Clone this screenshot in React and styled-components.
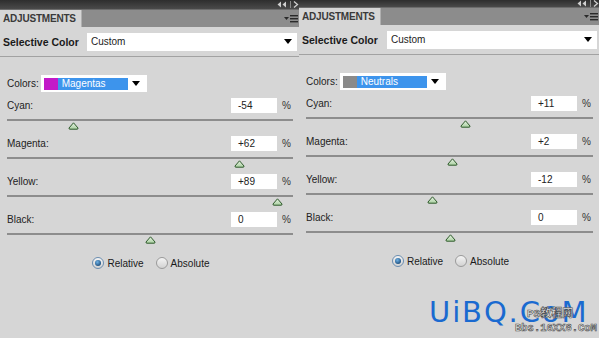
import React from "react"
import styled, { createGlobalStyle } from "styled-components"

const GlobalStyle = createGlobalStyle`
  html, body {
    margin: 0;
    padding: 0;
    background: #d6d6d6;
    overflow: hidden;
  }
  body {
    font-family: "Liberation Sans", Arial, sans-serif;
    color: #1c1c1c;
  }
`

const Screen = styled.div`
  position: relative;
  display: flex;
  width: 599px;
  height: 338px;
  background: #d6d6d6;
  overflow: hidden;
`

const Panel = styled.div`
  display: flex;
  flex-direction: column;
  width: ${props => props.$width}px;
  flex-shrink: 0;
`

const TopBar = styled.div`
  height: ${props => props.$height}px;
  background: linear-gradient(#2e2e2e, #4a4a4a);
  display: flex;
  align-items: center;
  justify-content: flex-end;
  overflow: hidden;
`

const TabBar = styled.div`
  height: 18px;
  display: flex;
  align-items: stretch;
  background: #8c8c8c;
  border-top: 1px solid #6c6c6c;
  box-sizing: border-box;
`

const Tab = styled.div`
  width: 82px;
  background: #d6d6d6;
  border-right: 1px solid #b0b0b0;
  display: flex;
  align-items: center;
  padding-left: 3px;
  box-sizing: border-box;
  font-size: 10px;
  font-weight: bold;
  color: #3a3a3a;
  letter-spacing: -0.2px;
`

const TabMenu = styled.div`
  margin-left: auto;
  display: flex;
  align-items: center;
  padding-right: 1px;
`

const PresetRow = styled.div`
  height: 29px;
  display: flex;
  align-items: center;
  padding: 0 2px 0 3px;
`

const PresetTitle = styled.span`
  font-size: 10.5px;
  font-weight: bold;
  color: #1a1a1a;
`

const Select = styled.div`
  margin-left: auto;
  width: ${props => props.$width}px;
  height: 18px;
  background: #fff;
  display: flex;
  align-items: center;
  padding: 0 5px 0 4px;
  box-sizing: border-box;
  font-size: 10px;
  color: #222;
`

const Caret = styled.svg`
  margin-left: auto;
  flex-shrink: 0;
`

const Divider = styled.div`
  height: 1px;
  background: #a2a2a2;
`

const Body = styled.div`
  padding: 0 6px 0 7px;
  display: flex;
  flex-direction: column;
`

const ColorsRow = styled.div`
  margin-top: 18px;
  display: flex;
  align-items: center;
  font-size: 10px;
`

const ColorSelect = styled.div`
  margin-left: 2px;
  width: 106px;
  height: 17px;
  background: #fff;
  display: flex;
  align-items: center;
  padding: 0 7px 0 3px;
  box-sizing: border-box;
`

const Swatch = styled.div`
  width: 14px;
  height: 12px;
  background: ${props => props.$color};
`

const Highlight = styled.div`
  width: 70px;
  height: 12px;
  background: #3d94ec;
  color: #fff;
  font-size: 10px;
  line-height: 12px;
  padding-left: 4px;
  box-sizing: border-box;
`

const SliderRow = styled.div`
  margin-top: ${props => props.$first ? 6 : 0}px;
  height: 38px;
  display: flex;
  flex-direction: column;
`

const SliderHeader = styled.div`
  height: 15px;
  display: flex;
  align-items: center;
  font-size: 10px;
  color: #222;
`

const ValueInput = styled.div`
  margin-left: auto;
  width: 46px;
  height: 15px;
  background: #fff;
  font-size: 10px;
  line-height: 15px;
  padding-left: 7px;
  box-sizing: border-box;
  color: #222;
`

const Percent = styled.span`
  width: 10px;
  margin-left: 5px;
  margin-right: 1px;
  font-size: 10px;
  color: #333;
`

const Track = styled.div`
  position: relative;
  margin-top: 6px;
  height: 2px;
  background: #8d8d8d;
`

const Thumb = styled.svg`
  position: absolute;
  top: 3px;
  margin-left: -5px;
`

const RadioRow = styled.div`
  margin-top: 7px;
  display: flex;
  justify-content: center;
  align-items: center;
  gap: 12px;
  font-size: 10px;
  color: #1a1a1a;
  padding-left: 2px;
`

const RadioItem = styled.label`
  display: flex;
  align-items: center;
  gap: 3px;
`

const RadioDot = styled.span`
  width: 12px;
  height: 12px;
  border-radius: 50%;
  border: 1px solid ${props => props.$on ? "#6a8db0" : "#9a9a9a"};
  box-sizing: border-box;
  background: linear-gradient(#f4f4f4, #d2d2d2);
  display: flex;
  align-items: center;
  justify-content: center;

  &::after {
    content: "";
    display: ${props => props.$on ? "block" : "none"};
    width: 6px;
    height: 6px;
    border-radius: 50%;
    background: radial-gradient(circle at 40% 35%, #6fb2e6, #1d4f7e 75%);
  }
`

const Watermark = styled.div`
  position: absolute;
  left: 429px;
  top: 295px;
  font-family: "DejaVu Sans", Verdana, sans-serif;
  font-size: 29px;
  letter-spacing: 1.9px;
  color: #1a6ad0;
  white-space: nowrap;
`

const Stamp = styled.div`
  position: absolute;
  left: ${props => props.$x}px;
  top: ${props => props.$y}px;
  font-family: "Liberation Mono", "Noto Sans CJK SC", monospace;
  font-size: ${props => props.$size}px;
  line-height: 1;
  font-weight: bold;
  color: #ececec;
  -webkit-text-stroke: 0.6px #4a4a4a;
  white-space: nowrap;
`

const CollapseIcon = () => (
  <svg width="22" height="7" viewBox="0 0 22 7">
    <path d="M4 0.5 L0.5 3.5 L4 6.5 Z M9 0.5 L5.5 3.5 L9 6.5 Z" fill="#cfcfcf" />
    <rect x="13" y="0" width="1" height="7" fill="#8a8a8a" />
    <path d="M17 0.5 L20.5 3.5 L17 6.5" fill="none" stroke="#cfcfcf" strokeWidth="1.3" />
  </svg>
)

const MenuIcon = () => (
  <svg width="14" height="9" viewBox="0 0 14 9">
    <path d="M0 3 L5 3 L2.5 6 Z" fill="#2a2a2a" />
    <rect x="6" y="1" width="8" height="1.4" fill="#2a2a2a" />
    <rect x="6" y="4" width="8" height="1.4" fill="#2a2a2a" />
    <rect x="6" y="7" width="8" height="1.4" fill="#2a2a2a" />
  </svg>
)

const DownCaret = () => (
  <Caret width="8" height="5" viewBox="0 0 8 5">
    <path d="M0 0 L8 0 L4 5 Z" fill="#000" />
  </Caret>
)

const SliderThumb = ({ value }) => (
  <Thumb width="11" height="8" viewBox="0 0 11 8" style={{ left: `${(value + 100) / 2}%` }}>
    <defs>
      <linearGradient id="thumbFill" x1="0" y1="0" x2="0" y2="1">
        <stop offset="0" stopColor="#e8f4e4" />
        <stop offset="1" stopColor="#a9cfa0" />
      </linearGradient>
    </defs>
    <path d="M5.5 0.8 L10 6 Q10.3 7.2 9 7.2 L2 7.2 Q0.7 7.2 1 6 Z" fill="url(#thumbFill)" stroke="#2f5a2c" strokeWidth="1" />
  </Thumb>
)

const formatValue = v => (v > 0 ? `+${v}` : `${v}`)

const AdjustmentsPanel = ({ width, top, swatch, colorName, values }) => (
  <Panel $width={width}>
    <TopBar $height={top}>
      <CollapseIcon />
    </TopBar>
    <TabBar>
      <Tab>ADJUSTMENTS</Tab>
      <TabMenu>
        <MenuIcon />
      </TabMenu>
    </TabBar>
    <PresetRow>
      <PresetTitle>Selective Color</PresetTitle>
      <Select $width={210}>
        Custom
        <DownCaret />
      </Select>
    </PresetRow>
    <Divider />
    <Body>
      <ColorsRow>
        Colors:
        <ColorSelect>
          <Swatch $color={swatch} />
          <Highlight>{colorName}</Highlight>
          <DownCaret />
        </ColorSelect>
      </ColorsRow>
      {values.map((item, i) => (
        <SliderRow key={item.label} $first={i === 0}>
          <SliderHeader>
            {item.label}:
            <ValueInput>{formatValue(item.value)}</ValueInput>
            <Percent>%</Percent>
          </SliderHeader>
          <Track>
            <SliderThumb value={item.value} />
          </Track>
        </SliderRow>
      ))}
      <RadioRow>
        <RadioItem>
          <RadioDot $on />
          Relative
        </RadioItem>
        <RadioItem>
          <RadioDot />
          Absolute
        </RadioItem>
      </RadioRow>
    </Body>
  </Panel>
)

const App = () => (
  <>
    <GlobalStyle />
    <Screen>
      <AdjustmentsPanel
        width={299}
        top={9}
        swatch="#c21ac8"
        colorName="Magentas"
        values={[
          { label: "Cyan", value: -54 },
          { label: "Magenta", value: 62 },
          { label: "Yellow", value: 89 },
          { label: "Black", value: 0 },
        ]}
      />
      <AdjustmentsPanel
        width={300}
        top={7}
        swatch="#8a8a8a"
        colorName="Neutrals"
        values={[
          { label: "Cyan", value: 11 },
          { label: "Magenta", value: 2 },
          { label: "Yellow", value: -12 },
          { label: "Black", value: 0 },
        ]}
      />
      <Watermark>UiBQ.CoM</Watermark>
      <Stamp $x={527} $y={309} $size={11}>PS教程网</Stamp>
      <Stamp $x={515} $y={323} $size={10.5}>Bbs.16XX8.CoM</Stamp>
    </Screen>
  </>
)

export default App
